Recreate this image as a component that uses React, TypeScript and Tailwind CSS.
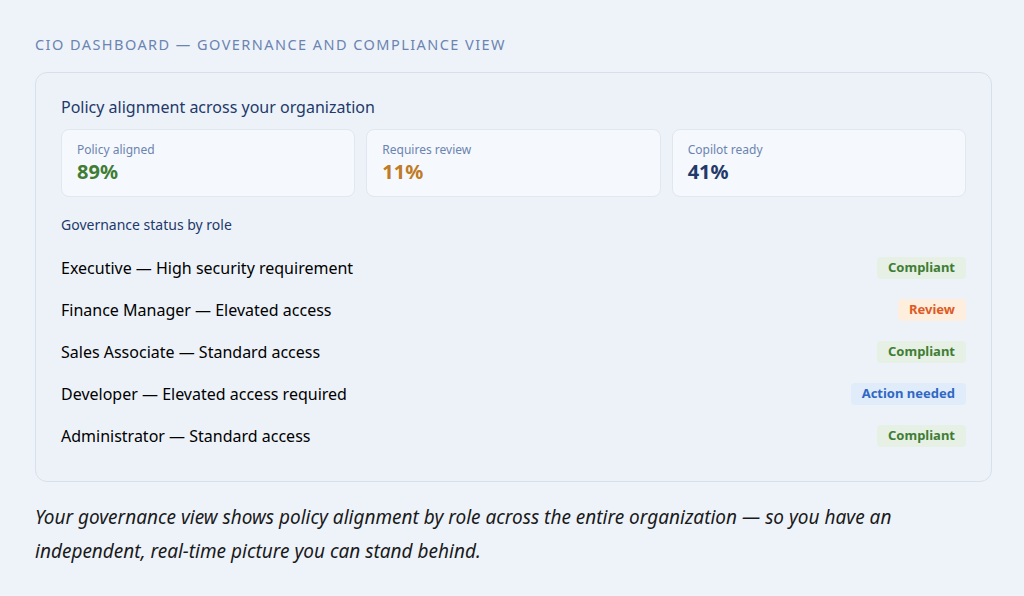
const stats = [
  { label: 'Policy aligned', value: '89%', color: 'text-[#3f7d35]' },
  { label: 'Requires review', value: '11%', color: 'text-[#c07b25]' },
  { label: 'Copilot ready', value: '41%', color: 'text-[#22396a]' },
];

const roles = [
  { name: 'Executive — High security requirement', badge: 'Compliant', cls: 'bg-[#e6f0e4] text-[#3f7d35]' },
  { name: 'Finance Manager — Elevated access', badge: 'Review', cls: 'bg-[#fdeedd] text-[#dd5a24]' },
  { name: 'Sales Associate — Standard access', badge: 'Compliant', cls: 'bg-[#e6f0e4] text-[#3f7d35]' },
  { name: 'Developer — Elevated access required', badge: 'Action needed', cls: 'bg-[#e1ecfa] text-[#2f68c4]' },
  { name: 'Administrator — Standard access', badge: 'Compliant', cls: 'bg-[#e6f0e4] text-[#3f7d35]' },
];

export default function App() {
  return (
    <div className="w-[1024px] h-[596px] bg-[#eef3fa] font-['Liberation_Sans'] overflow-hidden">
      <div className="px-[35px] pt-[35px]">
        <h1 className="text-[14.5px] tracking-[0.1em] text-[#6b84b0] leading-[18px]">
          CIO DASHBOARD — GOVERNANCE AND COMPLIANCE VIEW
        </h1>

        <div className="mt-[19px] w-[957px] h-[410px] rounded-[12px] border border-[#d8e0ec] bg-[#edf2f9] px-[25px] pt-[24px]">
          <h2 className="text-[16px] leading-[20px] text-[#22396a]">Policy alignment across your organization</h2>

          <div className="mt-[12px] grid grid-cols-3 gap-[11px]">
            {stats.map((s) => (
              <div key={s.label} className="h-[68px] rounded-[8px] border border-[#e1e7f0] bg-[#f5f8fc] px-[15px] pt-[12px]">
                <div className="text-[12px] leading-[15px] text-[#6b84b0]">{s.label}</div>
                <div className={`mt-[3px] text-[20px] leading-[24px] font-bold ${s.color}`}>{s.value}</div>
              </div>
            ))}
          </div>

          <div className="mt-[19px] text-[14px] leading-[18px] text-[#22396a]">Governance status by role</div>

          <div className="mt-[23px] flex flex-col gap-[20px]">
            {roles.map((r) => (
              <div key={r.name} className="flex items-center justify-between h-[22px]">
                <span className="text-[16px] text-black">{r.name}</span>
                <span className={`rounded-[4px] px-[11px] h-[22px] flex items-center text-[13px] font-bold ${r.cls}`}>
                  {r.badge}
                </span>
              </div>
            ))}
          </div>
        </div>

        <p className="mt-[18px] text-[19px] leading-[34px] italic text-[#1a1a1a] w-[960px]">
          Your governance view shows policy alignment by role across the entire organization — so you have an
          independent, real-time picture you can stand behind.
        </p>
      </div>
    </div>
  );
}
